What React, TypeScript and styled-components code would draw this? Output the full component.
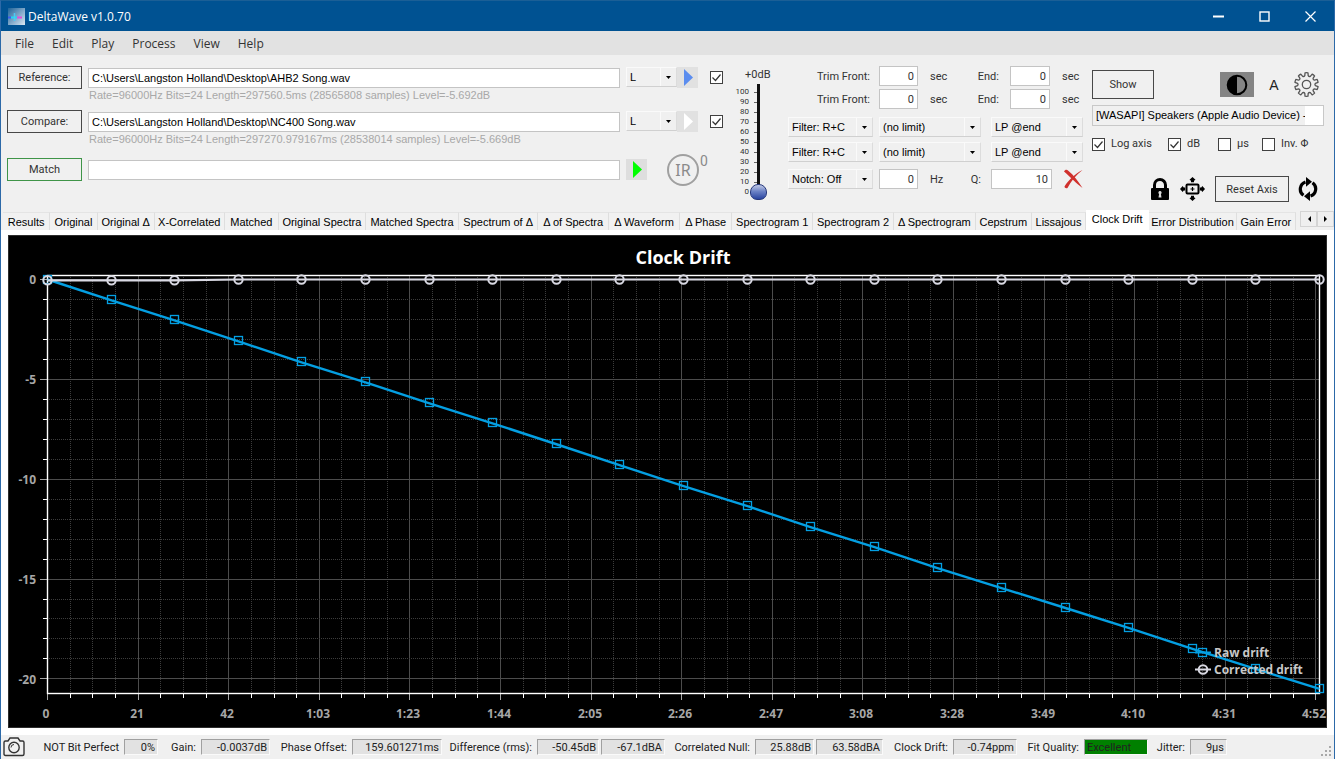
import React from "react";
import styled, { createGlobalStyle } from "styled-components";

const UI = `"Liberation Sans", Arial, sans-serif`;
const LABEL = `Roboto, "Liberation Sans", sans-serif`;
const SHELL = `"Open Sans", "Noto Sans", sans-serif`;

const Global = createGlobalStyle`
  *, *::before, *::after { box-sizing: border-box; }
  body { margin: 0; background: #f0f0f0; }
  button, input, select { font: inherit; color: inherit; margin: 0; }
`;

const Window = styled.div`
  display: flex;
  flex-direction: column;
  min-height: 100vh;
  border: 1px solid #2c69a8;
  border-top-color: #1b5f96;
  background: #f0f0f0;
  color: #333;
  font: 11px/14px ${LABEL};
`;

/* ---------- title bar and menu ---------- */

const TitleBar = styled.header`
  display: flex;
  align-items: center;
  height: 30px;
  padding: 0 1px 0 7px;
  background: #005292;
  color: #fff;
  font: 12px/16px ${SHELL};
`;

const AppName = styled.h1`
  flex: 1;
  margin: 0 0 0 3px;
  padding-top: 2px;
  font: inherit;
`;

const CaptionButton = styled.button`
  display: flex;
  align-items: center;
  justify-content: center;
  width: 46px;
  height: 30px;
  padding: 0;
  border: 0;
  background: none;
`;

const MenuBar = styled.nav`
  display: flex;
  height: 24px;
  padding-left: 5px;
  background: #e2e2e2;
  font: 12px/22px ${SHELL};
`;

const MenuItem = styled.button`
  padding: 2px 9px 0;
  border: 0;
  background: none;
`;

/* ---------- shared controls ---------- */

const Controls = styled.main`
  display: flex;
  align-items: flex-start;
  height: 156px;
  padding: 11px 10px 0 6px;
`;

const PushButton = styled.button<{ $w: number; $h: number; $accent?: string }>`
  flex: none;
  width: ${(p) => p.$w}px;
  height: ${(p) => p.$h}px;
  padding: 1px 0 0;
  border: 1px solid ${(p) => p.$accent ?? "#484848"};
  background: #f0f0f0;
`;

const IconButton = styled.button<{ $bg?: string; $w?: number; $h?: number }>`
  display: flex;
  flex: none;
  align-items: center;
  justify-content: center;
  width: ${(p) => p.$w ?? 21}px;
  height: ${(p) => p.$h ?? 21}px;
  padding: 0;
  border: 0;
  background: ${(p) => p.$bg ?? "none"};
`;

const PathInput = styled.input`
  flex: 1;
  min-width: 0;
  height: 20px;
  padding: 0 3px;
  border: 1px solid #c4c4c4;
  background: #fff;
  color: #000;
  font: 11px/18px ${UI};
`;

const NumberInput = styled.input<{ $w: number }>`
  flex: none;
  width: ${(p) => p.$w}px;
  height: 20px;
  padding: 0 3px;
  border: 1px solid #c4c4c4;
  background: #fff;
  text-align: right;
`;

const SelectBox = styled.span<{ $w: number }>`
  position: relative;
  display: block;
  flex: none;
  width: ${(p) => p.$w}px;
  height: 20px;
  border: 1px solid #fafafa;
  border-right-color: #dcdcdc;
  border-bottom-color: #d0d0d0;
`;

const NativeSelect = styled.select`
  display: block;
  width: 100%;
  height: 18px;
  padding: 0 18px 0 3px;
  border: 0;
  border-radius: 0;
  appearance: none;
  background: #f0f0f0;
  color: #000;
  font: 11px/18px ${UI};
`;

const DropArrow = styled.span`
  position: absolute;
  top: 0;
  right: 0;
  display: flex;
  align-items: center;
  justify-content: center;
  width: 16px;
  height: 18px;
  border-left: 1px solid #fafafa;
  pointer-events: none;
`;

const CheckInput = styled.input`
  flex: none;
  width: 13px;
  height: 13px;
  border: 1px solid #404040;
  appearance: none;
  background: #fff;
  &:checked {
    background: #fff
      url("data:image/svg+xml,%3Csvg xmlns='http://www.w3.org/2000/svg' viewBox='0 0 11 11'%3E%3Cpath d='M1.5 5.5l3 3 5-6' fill='none' stroke='%23333' stroke-width='1.2'/%3E%3C/svg%3E")
      center / 11px 11px no-repeat;
  }
`;

function Select({ label, value, width }: { label: string; value: string; width: number }) {
  return (
    <SelectBox $w={width}>
      <NativeSelect aria-label={label} defaultValue={value}>
        <option>{value}</option>
      </NativeSelect>
      <DropArrow>
        <svg width="5" height="3" viewBox="0 0 5 3">
          <path d="M0 0h5L2.5 3z" fill="#000" />
        </svg>
      </DropArrow>
    </SelectBox>
  );
}

/* ---------- file pickers ---------- */

const Files = styled.section`
  display: grid;
  flex: 1;
  grid-template-rows: 44px 48px 24px;
  min-width: 0;
`;

const FileLine = styled.div`
  display: flex;
  align-items: center;
  height: 23px;
  gap: 6px;
`;

const FileInfo = styled.p`
  margin: 0 0 0 82px;
  overflow: hidden;
  color: #a8a8a8;
  font: 11px/12px ${UI};
  white-space: nowrap;
`;

const FileTools = styled.div`
  display: flex;
  flex: none;
  align-items: center;
  justify-content: space-between;
  width: 97px;
`;

const ToolPair = styled.span`
  display: flex;
`;

const MatchTools = styled.div`
  display: flex;
  flex: none;
  align-items: center;
  width: 97px;
`;

const ImpulseButton = styled.button`
  flex: none;
  width: 32px;
  height: 32px;
  margin: 0 1px 0 20px;
  padding: 0;
  border: 2px solid #a0a0a0;
  border-radius: 50%;
  background: none;
  color: #8a8a8a;
  font: 16px/26px "Noto Sans", sans-serif;
`;

const ImpulseCount = styled.span`
  align-self: flex-start;
  color: #8a8a8a;
  font: 14px/14px ${LABEL};
`;

function PlayIcon({ fill }: { fill: string }) {
  return (
    <svg width="21" height="21" viewBox="0 0 21 21">
      <path d="M7 2v17l9-8.500z" fill={fill} />
    </svg>
  );
}

interface FileRowProps {
  button: string;
  path: string;
  info: string;
  play: string;
  bg: string;
}

function FileRow({ button, path, info, play, bg }: FileRowProps) {
  return (
    <div>
      <FileLine>
        <PushButton $w={75} $h={23}>{button}</PushButton>
        <PathInput aria-label={button} defaultValue={path} />
        <FileTools>
          <ToolPair>
            <Select label={`${button} channel`} value="L" width={51} />
            <IconButton $bg={bg} aria-label="Play">
              <PlayIcon fill={play} />
            </IconButton>
          </ToolPair>
          <CheckInput type="checkbox" defaultChecked aria-label={`${button} enabled`} />
        </FileTools>
      </FileLine>
      <FileInfo>{info}</FileInfo>
    </div>
  );
}

/* ---------- gain slider ---------- */

const Gain = styled.section`
  flex: none;
  width: 36px;
  margin-left: 12px;
`;

const GainLabel = styled.label`
  display: block;
  height: 18px;
  padding-left: 10px;
  line-height: 18px;
  white-space: nowrap;
`;

const GainBody = styled.div`
  display: flex;
`;

const Scale = styled.div`
  width: 21px;
  padding-top: 3px;
`;

const ScaleRow = styled.div`
  display: flex;
  align-items: center;
  justify-content: flex-end;
  gap: 5px;
  height: 10px;
  margin-right: -2px;
  font: 8px/10px ${LABEL};
  &::after {
    width: 4px;
    height: 1px;
    background: #666;
    content: "";
  }
`;

const GainRange = styled.input`
  width: 17px;
  height: 116px;
  margin-left: -6px;
  appearance: none;
  background: linear-gradient(#111, #111) center / 3px 100% no-repeat;
  writing-mode: vertical-lr;
  direction: rtl;
  &::-webkit-slider-thumb {
    width: 17px;
    height: 16px;
    border: 1px solid #26387c;
    border-radius: 8px 8px 7px 7px;
    appearance: none;
    background: linear-gradient(#c3cbe6, #6d83c6 45%, #2a45a0);
  }
`;

/* ---------- trim / filter / notch ---------- */

const Filters = styled.section`
  display: grid;
  flex: none;
  grid-template-rows: 23px 28px 25px 27px 20px;
  width: 295px;
  margin-left: 17px;
`;

const FilterLine = styled.div`
  display: flex;
  align-items: center;
  height: 20px;
`;

const SelectLine = styled.div`
  display: grid;
  grid-template-columns: 91px 112px 92px;
`;

const Caption = styled.label<{ $w: number; $gap: number }>`
  flex: none;
  width: ${(p) => p.$w}px;
  padding: 2px ${(p) => p.$gap}px 0 0;
  text-align: right;
`;

const Unit = styled.span<{ $w: number }>`
  flex: none;
  width: ${(p) => p.$w}px;
  padding: 2px 0 0 12px;
`;

const NotchSelect = styled.div`
  width: 91px;
`;

const ClearCell = styled.div`
  width: 32px;
  padding-left: 11px;
`;

function TrimLine({ id }: { id: string }) {
  return (
    <FilterLine>
      <Caption htmlFor={`${id}-front`} $w={91} $gap={9}>Trim Front:</Caption>
      <NumberInput id={`${id}-front`} $w={39} defaultValue="0" />
      <Unit $w={45}>sec</Unit>
      <Caption htmlFor={`${id}-end`} $w={47} $gap={11}>End:</Caption>
      <NumberInput id={`${id}-end`} $w={40} defaultValue="0" />
      <Unit $w={33}>sec</Unit>
    </FilterLine>
  );
}

/* ---------- output / axis panel ---------- */

const Output = styled.section`
  flex: none;
  width: 232px;
  margin-left: 9px;
  padding-top: 4px;
`;

const OutputLine = styled.div<{ $h: number }>`
  display: flex;
  align-items: center;
  justify-content: space-between;
  height: ${(p) => p.$h}px;
`;

const OutputTools = styled.div`
  display: flex;
  align-items: center;
  gap: 15px;
  padding-right: 5px;
`;

const AutoButton = styled(IconButton)`
  color: #222;
  font: 14px/16px ${UI};
`;

const DeviceSelect = styled.select`
  display: block;
  width: 100%;
  height: 21px;
  margin-top: 6px;
  padding: 0 18px 0 3px;
  overflow: hidden;
  border: 1px solid #c8c8c8;
  border-radius: 0;
  appearance: none;
  background: linear-gradient(90deg, transparent calc(100% - 18px), #fff 0) #f0f0f0;
  color: #000;
  font: 11px/19px ${UI};
  text-overflow: clip;
`;

const Options = styled.div`
  display: grid;
  grid-template-columns: 76px 50px 44px auto;
  height: 14px;
  margin: 10px 0 26px;
`;

const CheckLabel = styled.label`
  display: flex;
  align-items: center;
  gap: 6px;
  line-height: 16px;
`;

const AxisTools = styled.div`
  display: flex;
  align-items: center;
  justify-content: flex-end;
  gap: 9px;
  height: 26px;
  padding-right: 6px;
`;

function gearPath(teeth: number, outer: number, inner: number) {
  const step = (Math.PI * 2) / teeth;
  const at = (r: number, a: number) =>
    `${(12.5 + r * Math.sin(a)).toFixed(2)} ${(12.5 - r * Math.cos(a)).toFixed(2)}`;
  let d = "";
  for (let i = 0; i < teeth; i++) {
    const a = i * step;
    d += `${i ? "L" : "M"}${at(inner, a - step * 0.3)}L${at(outer, a - step * 0.2)}`;
    d += `A${outer} ${outer} 0 0 1 ${at(outer, a + step * 0.2)}L${at(inner, a + step * 0.3)}`;
    d += `Q${at(inner - 1, a + step * 0.5)} ${at(inner, a + step * 0.7)}`;
  }
  return d + "Z";
}

const GearIcon = () => (
  <svg width="25" height="25" viewBox="0 0 25 25" fill="none" stroke="#555" strokeWidth="1.3">
    <path d={gearPath(10, 11.8, 9)} strokeLinejoin="round" />
    <circle cx="12.500" cy="12.500" r="4.200" />
  </svg>
);

const ContrastIcon = () => (
  <svg width="22" height="22" viewBox="0 0 22 22">
    <circle cx="11" cy="11" r="9.300" fill="none" stroke="#000" strokeWidth="2" />
    <path d="M11 2a9 9 0 0 0 0 18z" fill="#000" />
  </svg>
);

const LockIcon = () => (
  <svg width="20" height="23" viewBox="0 0 20 23">
    <path d="M4.500 11V7a5.500 5.500 0 0 1 11 0v4" fill="none" stroke="#000" strokeWidth="3" />
    <rect x="1" y="10" width="18" height="12" rx="1" fill="#000" />
    <path d="M10 13a1.700 1.700 0 0 1 .9 3.100l.6 3.400h-3l.6-3.400A1.700 1.700 0 0 1 10 13z" fill="#ddd" />
  </svg>
);

const MoveIcon = () => (
  <svg width="27" height="25" viewBox="0 0 27 25">
    <rect x="7.500" y="7.500" width="12" height="9" rx="1" fill="none" stroke="#000" strokeWidth="2" />
    <path d="M11.500 12h4M13.500 10v4" stroke="#000" strokeWidth="1.200" />
    <path
      d="M13.500 0l3 2.700-1.500 1v1.500h-3V3.700l-1.500-1zM13.500 24l3-2.700-1.500-1v-1.500h-3v1.500l-1.500 1zM1 12l2.700-3 1 1.500h1.500v3H4.700L3.700 15zM26 12l-2.700-3-1 1.500h-1.500v3h1.500l1 1.500z"
      fill="#000"
    />
  </svg>
);

const SyncIcon = () => (
  <svg width="20" height="24" viewBox="0 0 20 24">
    <g fill="none" stroke="#000" strokeWidth="3.200">
      <path d="M5.500 18.300A7.600 7.600 0 0 1 7.500 4.900" />
      <path d="M14.500 5.700A7.600 7.600 0 0 1 12.500 19.100" />
    </g>
    <path d="M8 0l6 4.800L8 9.800zM12 24l-6-4.800 6-5z" fill="#000" />
  </svg>
);

const CrossIcon = () => (
  <svg width="21" height="20" viewBox="0 0 21 20" fill="#d0312d">
    <path d="M1 2.500C2 .5 4 .5 5 1.500c6 5 10 10.500 14.500 17.500C14 15 7 8 1 2.500z" />
    <path d="M19.500 1C12 5 5.500 11 1.500 17.500c0 1.500 1.500 2 3 1.500C8 12 13 6 19.500 1z" />
  </svg>
);

/* ---------- tabs ---------- */

const TabStrip = styled.div`
  display: flex;
  align-items: flex-end;
  height: 19px;
  padding-left: 2px;
`;

const Tab = styled.button<{ $grow: number; $active: boolean }>`
  flex: ${(p) => p.$grow} 1 0;
  min-width: 0;
  height: ${(p) => (p.$active ? 20 : 18)}px;
  padding: 0 0 ${(p) => (p.$active ? 3 : 0)}px;
  border: 0;
  border-top: 1px solid ${(p) => (p.$active ? "#fff" : "#e4e4e4")};
  border-right: 1px solid ${(p) => (p.$active ? "#fff" : "#dedede")};
  background: ${(p) => (p.$active ? "#fff" : "#f1f1f1")};
  color: #000;
  font: 11px/16px ${UI};
  white-space: nowrap;
`;

const TabScroll = styled.button`
  display: flex;
  flex: none;
  align-items: center;
  justify-content: center;
  align-self: flex-start;
  width: 17px;
  height: 16px;
  padding: 0;
  border: 1px solid #d4d4d4;
  background: #efefef;
`;

const TabGap = styled.span`
  flex: none;
  width: 4px;
`;

const TABS: [string, number][] = [
  ["Results", 47], ["Original", 47], ["Original Δ", 57], ["X-Correlated", 70],
  ["Matched", 54], ["Original Spectra", 87], ["Matched Spectra", 94],
  ["Spectrum of Δ", 79], ["Δ of Spectra", 71], ["Δ Waveform", 71], ["Δ Phase", 52],
  ["Spectrogram 1", 81], ["Spectrogram 2", 81], ["Δ Spectrogram", 82],
  ["Cepstrum", 56], ["Lissajous", 54], ["Clock Drift", 63],
  ["Error Distribution", 88], ["Gain Error", 59],
];

const TabPage = styled.section`
  flex: 1;
  padding: 5px 7px 7px;
  background: #fff;
`;

/* ---------- chart ---------- */

const ChartSvg = styled.svg`
  display: block;
  width: 100%;
  height: auto;
  background: #000;
`;

const ChartText = styled.text<{ $size: number; $color: string }>`
  fill: ${(p) => p.$color};
  font: bold ${(p) => p.$size}px ${SHELL};
`;

const RAW = [
  0, -1.05, -2.05, -3.1, -4.15, -5.15, -6.2, -7.2, -8.25, -9.3, -10.35,
  -11.35, -12.4, -13.4, -14.45, -15.45, -16.45, -17.45, -18.5, -19.5, -20.5,
];
const CORRECTED = RAW.map((_, i) => (i < 3 ? -0.04 : 0));
const TIMES = [
  "0", "21", "42", "1:03", "1:23", "1:44", "2:05", "2:26", "2:47", "3:08",
  "3:28", "3:49", "4:10", "4:31", "4:52",
];

const LEFT = 39;
const RIGHT = 1311;
const TOP = 40;
const BOTTOM = 458;
const tickX = (i: number) => Math.round(LEFT + i * 22.65) + 0.5;
const dataX = (i: number) => Math.round(LEFT + (i * (RIGHT - LEFT)) / 20) + 0.5;
const dataY = (v: number) => 44.5 - v * 19.97;
const line = (values: number[]) => values.map((v, i) => `${dataX(i)},${dataY(v)}`).join(" ");

function DriftChart() {
  const verticals = Array.from({ length: 57 }, (_, i) => i);
  const horizontals = Array.from({ length: 21 }, (_, i) => i);
  return (
    <ChartSvg viewBox="0 0 1319 493" role="img" aria-label="Clock Drift">
      <rect x="0.500" y="0.500" width="1318" height="492" fill="none" stroke="#2c2c2c" />
      {verticals.map((i) => {
        const major = i % 4 === 0;
        return (
          <g key={i}>
            <path
              d={`M${tickX(i)} ${TOP}V${BOTTOM}`}
              stroke={major ? "#4c4c4c" : "#3c3c3c"}
              strokeDasharray={major ? undefined : "1 1"}
            />
            <path
              d={`M${tickX(i)} ${BOTTOM}v${major ? 7 : 5}`}
              stroke={major ? "#a8a8a8" : "#fff"}
            />
          </g>
        );
      })}
      {horizontals.map((i) => {
        const major = i % 5 === 0;
        const y = Math.floor(dataY(-i)) + 0.5;
        return (
          <g key={i}>
            <path
              d={`M${LEFT} ${y}H${RIGHT}`}
              stroke={major ? "#4c4c4c" : "#3c3c3c"}
              strokeDasharray={major ? undefined : "1 1"}
            />
            <path
              d={`M${major ? 32 : 35} ${y}H${LEFT}`}
              stroke={major ? "#a8a8a8" : "#fff"}
            />
          </g>
        );
      })}
      <rect x={LEFT + 0.5} y={TOP + 0.5} width={RIGHT - LEFT} height={BOTTOM - TOP} fill="none" stroke="#fff" strokeWidth="1.400" />

      <g fill="none" stroke="#049fe2">
        <polyline points={line(RAW)} strokeWidth="2.400" />
        {RAW.map((v, i) => (
          <rect key={i} x={dataX(i) - 4} y={Math.round(dataY(v)) - 4.5} width="8" height="8" strokeWidth="1.300" />
        ))}
      </g>
      <g fill="none" stroke="#d9d9e3">
        <polyline points={line(CORRECTED)} strokeWidth="2.200" />
        {CORRECTED.map((v, i) => (
          <circle key={i} cx={dataX(i)} cy={dataY(v)} r="4.200" strokeWidth="2" />
        ))}
      </g>

      <ChartText x="675" y="29" textAnchor="middle" $size={18} $color="#fff">Clock Drift</ChartText>
      {[0, 5, 10, 15, 20].map((v) => (
        <ChartText key={v} x="28" y={49 + v * 20} textAnchor="end" $size={12} $color="#a6a6a6">
          {v ? `-${v}` : "0"}
        </ChartText>
      ))}
      {TIMES.map((t, i) => (
        <ChartText key={t} x={Math.round(38 + i * 90.6)} y="483" textAnchor="middle" $size={12} $color="#a6a6a6">
          {t}
        </ChartText>
      ))}

      <g fill="none" strokeWidth="2">
        <path d="M1187 417.500h16" stroke="#049fe2" />
        <rect x="1190.500" y="413.500" width="8" height="8" stroke="#049fe2" strokeWidth="1.300" />
        <path d="M1187 434.500h16" stroke="#d9d9e3" />
        <circle cx="1195" cy="434.500" r="4.300" stroke="#d9d9e3" />
      </g>
      <ChartText x="1206" y="422" $size={12} $color="#c8c8c8">Raw drift</ChartText>
      <ChartText x="1206" y="439" $size={12} $color="#c8c8c8">Corrected drift</ChartText>
    </ChartSvg>
  );
}

/* ---------- status bar ---------- */

const StatusBar = styled.footer`
  display: flex;
  align-items: center;
  height: 24px;
  padding-left: 2px;
  color: #222;
`;

const StatusLabel = styled.span<{ $w: number }>`
  flex: none;
  width: ${(p) => p.$w}px;
  padding: 1px 5px 0 0;
  text-align: right;
  white-space: nowrap;
`;

const StatusValue = styled.output<{ $w: number; $good?: boolean }>`
  flex: none;
  width: ${(p) => p.$w}px;
  height: 16px;
  margin-right: 2px;
  padding: 0 2px;
  border: 1px solid #fafafa;
  border-top-color: #a0a0a0;
  border-left-color: #a0a0a0;
  background: ${(p) => (p.$good ? "#008000" : "#e2e2e2")};
  line-height: 15px;
  text-align: ${(p) => (p.$good ? "left" : "right")};
  white-space: nowrap;
`;

const Grip = styled.svg`
  align-self: flex-end;
  margin: 0 2px 2px auto;
`;

interface Status {
  label: string;
  labelWidth: number;
  values: [string, number][];
  good?: boolean;
}

const STATUS: Status[] = [
  { label: "NOT Bit Perfect", labelWidth: 99, values: [["0%", 34]] },
  { label: "Gain:", labelWidth: 41, values: [["-0.0037dB", 69]] },
  { label: "Phase Offset:", labelWidth: 80, values: [["159.601271ms", 90]] },
  { label: "Difference (rms):", labelWidth: 93, values: [["-50.45dB", 62], ["-67.1dBA", 64]] },
  { label: "Correlated Null:", labelWidth: 88, values: [["25.88dB", 59], ["63.58dBA", 67]] },
  { label: "Clock Drift:", labelWidth: 68, values: [["-0.74ppm", 64]] },
  { label: "Fit Quality:", labelWidth: 65, values: [["Excellent", 64]], good: true },
  { label: "Jitter:", labelWidth: 40, values: [["9µs", 37]] },
];

const CameraIcon = () => (
  <svg width="22" height="20" viewBox="0 0 22 20" fill="none" stroke="#333" strokeWidth="1.400">
    <path d="M1 5.500q0-1.500 1.500-1.500H5l2-3h8l2 3h2.500q1.500 0 1.500 1.500v11.500q0 1.500-1.500 1.500h-17Q1 18.500 1 17z" />
    <circle cx="11" cy="10.500" r="5.200" />
    <path d="M8 10.500a3 3 0 0 1 3-3" strokeWidth="1" />
  </svg>
);

export default function App() {
  return (
    <>
      <Global />
      <Window>
        <TitleBar>
          <svg width="17" height="17" viewBox="0 0 17 17">
            <defs>
              <linearGradient id="logo" x1="0" y1="0" x2="1" y2="1">
                <stop offset="0" stopColor="#1d6399" />
                <stop offset="0.600" stopColor="#8fb2d0" />
                <stop offset="1" stopColor="#dce8f2" />
              </linearGradient>
            </defs>
            <rect width="17" height="17" fill="url(#logo)" />
            <path d="M0 9.500h3" stroke="#3a5cf0" strokeWidth="2" />
            <path d="M3 9.500h6" stroke="#20d8f4" strokeWidth="2" />
            <path d="M9 9.500h5" stroke="#e050d8" strokeWidth="2" />
            <path d="M6.500 5v8" stroke="#4cc8f4" strokeWidth="1.500" />
          </svg>
          <AppName>DeltaWave v1.0.70</AppName>
          <CaptionButton aria-label="Minimize">
            <svg width="11" height="11"><path d="M0 5.500h11" stroke="#fff" strokeWidth="2" /></svg>
          </CaptionButton>
          <CaptionButton aria-label="Maximize">
            <svg width="11" height="11"><rect x="1" y="1" width="9" height="9" fill="none" stroke="#fff" strokeWidth="1.400" /></svg>
          </CaptionButton>
          <CaptionButton aria-label="Close">
            <svg width="11" height="11"><path d="M.5.5l10 10M10.500.5l-10 10" stroke="#fff" strokeWidth="1.200" /></svg>
          </CaptionButton>
        </TitleBar>
        <MenuBar>
          {["File", "Edit", "Play", "Process", "View", "Help"].map((m) => (
            <MenuItem key={m}>{m}</MenuItem>
          ))}
        </MenuBar>

        <Controls>
          <Files>
            <FileRow
              button="Reference:"
              path="C:\Users\Langston Holland\Desktop\AHB2 Song.wav"
              info="Rate=96000Hz Bits=24 Length=297560.5ms (28565808 samples) Level=-5.692dB"
              play="#5b8def"
              bg="#e1e1e1"
            />
            <FileRow
              button="Compare:"
              path="C:\Users\Langston Holland\Desktop\NC400 Song.wav"
              info="Rate=96000Hz Bits=24 Length=297270.979167ms (28538014 samples) Level=-5.669dB"
              play="#fff"
              bg="#e1e1e1"
            />
            <FileLine>
              <PushButton $w={75} $h={23} $accent="#3f9448">Match</PushButton>
              <PathInput aria-label="Match" />
              <MatchTools>
                <IconButton $bg="#dedede" aria-label="Play difference">
                  <PlayIcon fill="#00ff00" />
                </IconButton>
                <ImpulseButton>IR</ImpulseButton>
                <ImpulseCount>0</ImpulseCount>
              </MatchTools>
            </FileLine>
          </Files>

          <Gain>
            <GainLabel htmlFor="gain">+0dB</GainLabel>
            <GainBody>
              <Scale>
                {[100, 90, 80, 70, 60, 50, 40, 30, 20, 10, 0].map((n) => (
                  <ScaleRow key={n}>{n}</ScaleRow>
                ))}
              </Scale>
              <GainRange id="gain" type="range" min="0" max="100" defaultValue="0" />
            </GainBody>
          </Gain>

          <Filters>
            <TrimLine id="trim-reference" />
            <TrimLine id="trim-compare" />
            {["Reference", "Compare"].map((f) => (
              <SelectLine key={f}>
                <Select label={`${f} filter`} value="Filter: R+C" width={85} />
                <Select label={`${f} limit`} value="(no limit)" width={102} />
                <Select label={`${f} low pass`} value="LP @end" width={92} />
              </SelectLine>
            ))}
            <FilterLine>
              <NotchSelect>
                <Select label="Notch" value="Notch: Off" width={85} />
              </NotchSelect>
              <NumberInput aria-label="Notch frequency" $w={39} defaultValue="0" />
              <Unit $w={33}>Hz</Unit>
              <Caption htmlFor="notch-q" $w={40} $gap={10}>Q:</Caption>
              <NumberInput id="notch-q" $w={61} defaultValue="10" />
              <ClearCell>
                <IconButton aria-label="Clear filters"><CrossIcon /></IconButton>
              </ClearCell>
            </FilterLine>
          </Filters>

          <Output>
            <OutputLine $h={29}>
              <PushButton $w={62} $h={29}>Show</PushButton>
              <OutputTools>
                <IconButton $bg="#848484" $w={34} $h={25} aria-label="Contrast"><ContrastIcon /></IconButton>
                <AutoButton $w={10}>A</AutoButton>
                <IconButton $w={25} $h={25} aria-label="Settings"><GearIcon /></IconButton>
              </OutputTools>
            </OutputLine>
            <DeviceSelect aria-label="Output device">
              <option>[WASAPI] Speakers (Apple Audio Device) - Output</option>
            </DeviceSelect>
            <Options>
              <CheckLabel><CheckInput type="checkbox" defaultChecked />Log axis</CheckLabel>
              <CheckLabel><CheckInput type="checkbox" defaultChecked />dB</CheckLabel>
              <CheckLabel><CheckInput type="checkbox" />µs</CheckLabel>
              <CheckLabel><CheckInput type="checkbox" />Inv. Φ</CheckLabel>
            </Options>
            <AxisTools>
              <IconButton $w={20} $h={25} aria-label="Lock"><LockIcon /></IconButton>
              <IconButton $w={27} $h={25} aria-label="Fit"><MoveIcon /></IconButton>
              <PushButton $w={74} $h={26}>Reset Axis</PushButton>
              <IconButton $w={20} $h={25} aria-label="Refresh"><SyncIcon /></IconButton>
            </AxisTools>
          </Output>
        </Controls>

        <TabStrip role="tablist">
          {TABS.map(([name, grow]) => (
            <Tab key={name} role="tab" $grow={grow} $active={name === "Clock Drift"}>{name}</Tab>
          ))}
          <TabGap />
          <TabScroll aria-label="Previous tabs">
            <svg width="4" height="6"><path d="M4 0v6L1 3z" /></svg>
          </TabScroll>
          <TabScroll aria-label="Next tabs">
            <svg width="4" height="6"><path d="M0 0v6l3-3z" /></svg>
          </TabScroll>
        </TabStrip>
        <TabPage>
          <DriftChart />
        </TabPage>

        <StatusBar>
          <IconButton $w={22} $h={20} aria-label="Screenshot"><CameraIcon /></IconButton>
          {STATUS.map((s) => (
            <React.Fragment key={s.label}>
              <StatusLabel $w={s.labelWidth}>{s.label}</StatusLabel>
              {s.values.map(([v, w]) => (
                <StatusValue key={v} $w={w} $good={s.good}>{v}</StatusValue>
              ))}
            </React.Fragment>
          ))}
          <Grip width="12" height="11" fill="#a8a8a8">
            <path d="M9 0h2v2H9zM9 4h2v2H9zM9 8h2v2H9zM5 4h2v2H5zM5 8h2v2H5zM1 8h2v2H1z" />
          </Grip>
        </StatusBar>
      </Window>
    </>
  );
}
